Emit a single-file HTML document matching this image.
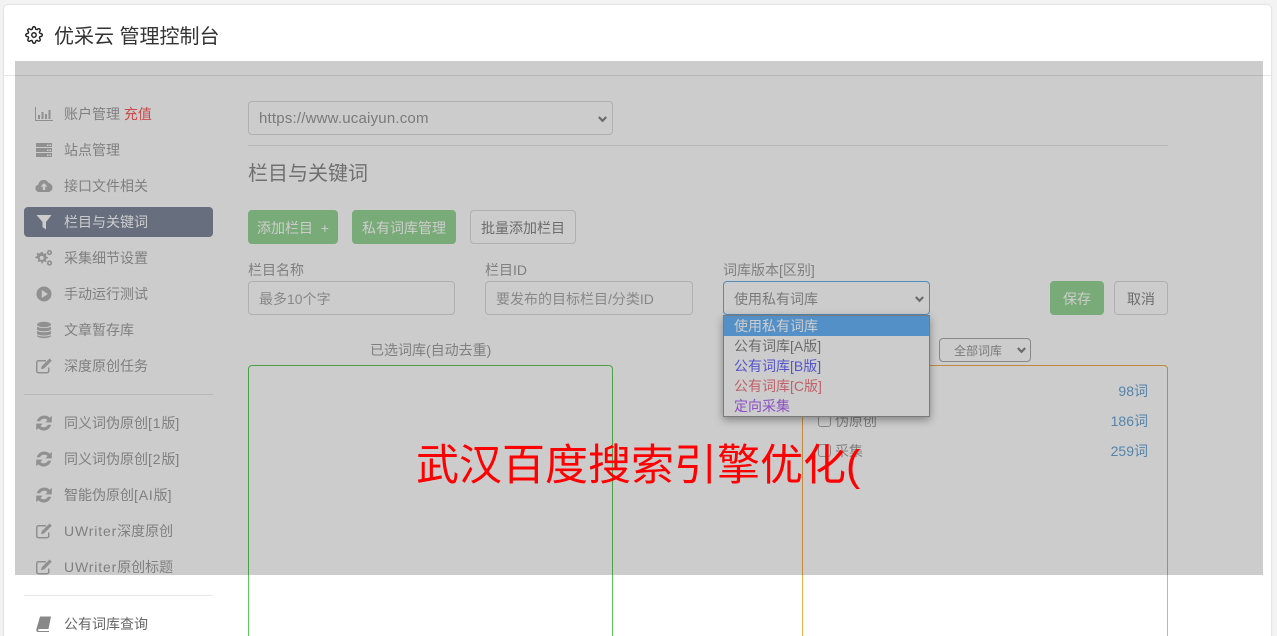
<!DOCTYPE html>
<html lang="zh">
<head>
<meta charset="utf-8">
<title>优采云 管理控制台</title>
<style>
html,body{margin:0;padding:0;width:1277px;height:636px;overflow:hidden;background:#f3f3f3;font-family:"Liberation Sans","Noto Sans CJK SC",sans-serif;font-size:14px;color:#666}
#w{position:relative;width:1277px;height:636px;overflow:hidden}
.a{position:absolute;box-sizing:border-box;white-space:nowrap}
.card{left:4px;top:5px;width:1267px;height:640px;background:#fff;border-radius:4px;box-shadow:0 0 2px rgba(0,0,0,.18)}
.title{left:54px;top:23px;font-size:20px;line-height:28px;color:#333}
.hline{height:1px;background:#e7e7e7}
.nav{left:64px;height:20px;line-height:20px;font-size:14px;color:#a0a0a0}
.nav b{font-weight:normal;letter-spacing:.85px}
.ic{position:absolute;left:35px;width:18px;height:18px;fill:#b4b4b4;stroke:none}
.ctl{border:1px solid #ddd;border-radius:4px;background:#fff;height:34px;line-height:34px;padding-left:10px;color:#999;font-size:14px}
.chev{position:absolute;width:9px;height:7px;fill:none;stroke:#888;stroke-width:2.2}
.btn{height:34px;line-height:34px;text-align:center;border-radius:4px;font-size:14px;border:1px solid #ddd;color:#888;background:#fff}
.g{background:#98d696;border-color:#98d696;color:#fff}
.lab{font-size:14px;line-height:20px;color:#a0a0a0}
.cnt{right:129px;font-size:14px;line-height:20px;color:#6ba6d6}
.chk{width:13px;height:13px;border:1px solid #aaa;border-radius:3px;background:#fff}
.opt{width:205px;height:20px;line-height:20px;padding-left:10px;font-size:14px}
</style>
</head>
<body>
<div id="w">
<div class="a card"></div>
<svg class="a" style="left:25px;top:26px;width:18px;height:18px" viewBox="0 0 24 24" fill="none" stroke="#222" stroke-width="1.900"><circle cx="12" cy="12" r="3"/><path d="M19.400 15a1.650 1.650 0 0 0 .33 1.820l.06.06a2 2 0 0 1 0 2.830 2 2 0 0 1-2.830 0l-.06-.06a1.650 1.650 0 0 0-1.820-.33 1.650 1.650 0 0 0-1 1.510V21a2 2 0 0 1-2 2 2 2 0 0 1-2-2v-.09A1.650 1.650 0 0 0 9 19.400a1.650 1.650 0 0 0-1.820.33l-.06.06a2 2 0 0 1-2.830 0 2 2 0 0 1 0-2.830l.06-.06a1.650 1.650 0 0 0 .33-1.820 1.650 1.650 0 0 0-1.510-1H3a2 2 0 0 1-2-2 2 2 0 0 1 2-2h.09A1.650 1.650 0 0 0 4.600 9a1.650 1.650 0 0 0-.33-1.820l-.06-.06a2 2 0 0 1 0-2.830 2 2 0 0 1 2.830 0l.06.06a1.650 1.650 0 0 0 1.820.33H9a1.650 1.650 0 0 0 1-1.510V3a2 2 0 0 1 2-2 2 2 0 0 1 2 2v.09a1.650 1.650 0 0 0 1 1.510 1.650 1.650 0 0 0 1.820-.33l.06-.06a2 2 0 0 1 2.830 0 2 2 0 0 1 0 2.830l-.06.06a1.650 1.650 0 0 0-.33 1.820V9a1.650 1.650 0 0 0 1.510 1H21a2 2 0 0 1 2 2 2 2 0 0 1-2 2h-.09a1.650 1.650 0 0 0-1.510 1z"/></svg>
<div class="a title">优采云 管理控制台</div>
<div class="a hline" style="left:4px;top:75px;width:1267px"></div>

<svg class="ic" style="top:105px" viewBox="0 0 18 18"><path d="M0 2h1v13h17v1H0z"/><path d="M3 10h2v4H3zM6.500 7h2v7h-2zM10 9h2v5h-2zM13.500 5h2v9h-2z"/></svg>
<div class="a nav" style="top:104px">账户管理 <span style="color:#ff5c5c">充值</span></div>
<svg class="ic" style="top:141px" viewBox="0 0 18 18"><path d="M1 2h16v4H1zM1 7h16v4H1zM1 12h16v4H1z"/><path fill="#fff" d="M12 3.500h1.500V5H12zM14.500 3.500H16V5h-1.500zM12 8.500h1.500V10H12zM14.500 8.500H16V10h-1.500zM12 13.500h1.500V15H12zM14.500 13.500H16V15h-1.500z"/></svg>
<div class="a nav" style="top:140px">站点管理</div>
<svg class="ic" style="top:177px" viewBox="0 0 18 18"><path d="M4 15a3.700 3.700 0 0 1-.8-7.300A5.500 5.500 0 0 1 13.600 6a4.600 4.600 0 0 1 .4 9z"/><path fill="#fff" d="M9 6l3.500 3.600H10.200V13H7.800V9.600H5.500z"/></svg>
<div class="a nav" style="top:176px">接口文件相关</div>
<div class="a" style="left:24px;top:207px;width:189px;height:30px;background:#818a9e;border-radius:4px"></div>
<svg class="ic" style="top:213px;fill:#fff" viewBox="0 0 18 18"><path d="M1.500 2h15L11 9v7.500L7.500 14V9z"/></svg>
<div class="a nav" style="top:212px;color:#fff">栏目与关键词</div>
<svg class="ic" style="top:249px" viewBox="0 0 18 18"><path d="M6.800 3.500h1.400l.4 1.700 1.200.5 1.500-.9 1 1-.9 1.500.5 1.200 1.700.4v1.400l-1.700.4-.5 1.200.9 1.500-1 1-1.500-.9-1.200.5-.4 1.700H6.800l-.4-1.700-1.200-.5-1.500.9-1-1 .9-1.500-.5-1.200L.4 10V8.600l1.700-.4.500-1.200-.9-1.500 1-1 1.500.9 1.200-.5z" transform="translate(0 -.5) scale(.95)"/><circle cx="14.500" cy="3.500" r="2.600"/><circle cx="14.500" cy="14" r="2.600"/><circle cx="6.700" cy="8.900" r="2" fill="#fff"/><circle cx="14.500" cy="3.500" r="1" fill="#fff"/><circle cx="14.500" cy="14" r="1" fill="#fff"/></svg>
<div class="a nav" style="top:248px">采集细节设置</div>
<svg class="ic" style="top:285px" viewBox="0 0 18 18"><circle cx="9" cy="9" r="7.500"/><path fill="#fff" d="M6.800 5l6 4-6 4z"/></svg>
<div class="a nav" style="top:284px">手动运行测试</div>
<svg class="ic" style="top:321px" viewBox="0 0 18 18"><ellipse cx="9" cy="3.500" rx="7" ry="2.700"/><path d="M2 5.500c1 2 13 2 14 0v3c-1 2.300-13 2.300-14 0zM2 9.800c1 2 13 2 14 0v3c-1 2.300-13 2.300-14 0zM2 14c1 2 13 2 14 0v1c-1 2.800-13 2.800-14 0z"/></svg>
<div class="a nav" style="top:320px">文章暂存库</div>
<svg class="ic" style="top:357px" viewBox="0 0 18 18"><path d="M3.500 3H11v1.500H3.500a1 1 0 0 0-1 1V14a1 1 0 0 0 1 1H12a1 1 0 0 0 1-1v-3.500h1.500V14a2.500 2.500 0 0 1-2.500 2.500H3.500A2.500 2.500 0 0 1 1 14V5.500A2.500 2.500 0 0 1 3.500 3z"/><path d="M14.500 1.500l2.300 2.300L9 11.500l-3 .7.700-3z"/></svg>
<div class="a nav" style="top:356px">深度原创任务</div>
<div class="a hline" style="left:24px;top:394px;width:189px"></div>

<svg class="ic" style="top:414px" viewBox="1.500 1.500 15 15"><path d="M3 7.500a6.500 6.500 0 0 1 10.800-2.900L15.500 3v5.500H10l2-2a4 4 0 0 0-6.300 1zM15 10.500A6.500 6.500 0 0 1 4.200 13.400L2.500 15V9.500H8l-2 2a4 4 0 0 0 6.300-1z"/></svg>
<div class="a nav" style="top:413px">同义词伪原创<b>[1</b>版<b>]</b></div>
<svg class="ic" style="top:450px" viewBox="1.500 1.500 15 15"><path d="M3 7.500a6.500 6.500 0 0 1 10.800-2.900L15.500 3v5.500H10l2-2a4 4 0 0 0-6.300 1zM15 10.500A6.500 6.500 0 0 1 4.200 13.400L2.500 15V9.500H8l-2 2a4 4 0 0 0 6.300-1z"/></svg>
<div class="a nav" style="top:449px">同义词伪原创<b>[2</b>版<b>]</b></div>
<svg class="ic" style="top:486px" viewBox="1.500 1.500 15 15"><path d="M3 7.500a6.500 6.500 0 0 1 10.800-2.900L15.500 3v5.500H10l2-2a4 4 0 0 0-6.300 1zM15 10.500A6.500 6.500 0 0 1 4.200 13.400L2.500 15V9.500H8l-2 2a4 4 0 0 0 6.300-1z"/></svg>
<div class="a nav" style="top:485px">智能伪原创<b>[AI</b>版<b>]</b></div>
<svg class="ic" style="top:522px" viewBox="0 0 18 18"><path d="M3.500 3H11v1.500H3.500a1 1 0 0 0-1 1V14a1 1 0 0 0 1 1H12a1 1 0 0 0 1-1v-3.500h1.500V14a2.500 2.500 0 0 1-2.500 2.500H3.500A2.500 2.500 0 0 1 1 14V5.500A2.500 2.500 0 0 1 3.500 3z"/><path d="M14.500 1.500l2.300 2.300L9 11.500l-3 .7.700-3z"/></svg>
<div class="a nav" style="top:521px"><b>UWriter</b>深度原创</div>
<svg class="ic" style="top:558px" viewBox="0 0 18 18"><path d="M3.500 3H11v1.500H3.500a1 1 0 0 0-1 1V14a1 1 0 0 0 1 1H12a1 1 0 0 0 1-1v-3.500h1.500V14a2.500 2.500 0 0 1-2.500 2.500H3.500A2.500 2.500 0 0 1 1 14V5.500A2.500 2.500 0 0 1 3.500 3z"/><path d="M14.500 1.500l2.300 2.300L9 11.500l-3 .7.700-3z"/></svg>
<div class="a nav" style="top:557px"><b>UWriter</b>原创标题</div>
<div class="a hline" style="left:24px;top:595px;width:189px"></div>
<svg class="ic" style="top:615px;fill:#888" viewBox="0 0 18 18"><path d="M5 1.500h11l-2.500 12.500H4.500c-1 0-1.500.5-1.500 1s.5 1 1.500 1H14v1H3.500C2 17 1 16 1.300 14.500z"/></svg>
<div class="a nav" style="top:614px;color:#666">公有词库查询</div>

<div class="a ctl" style="left:248px;top:101px;width:365px;font-size:15px;letter-spacing:.2px;color:#999">https://www.ucaiyun.com<svg class="chev" style="right:5px;top:14px" viewBox="0 0 9 7"><path d="M.8 1l3.700 3.800L8.200 1"/></svg></div>
<div class="a hline" style="left:248px;top:145px;width:920px"></div>
<div class="a" style="left:248px;top:160px;font-size:20px;line-height:28px;color:#8c8c8c">栏目与关键词</div>

<div class="a btn g" style="left:248px;top:210px;width:90px;text-align:left;padding-left:8px">添加栏目&nbsp; +</div>
<div class="a btn g" style="left:352px;top:210px;width:104px">私有词库管理</div>
<div class="a btn" style="left:470px;top:210px;width:106px">批量添加栏目</div>

<div class="a lab" style="left:248px;top:260px">栏目名称</div>
<div class="a lab" style="left:485px;top:260px">栏目ID</div>
<div class="a lab" style="left:723px;top:260px">词库版本[区别]</div>
<div class="a ctl" style="left:248px;top:281px;width:207px;color:#aaa">最多10个字</div>
<div class="a ctl" style="left:485px;top:281px;width:208px;color:#aaa">要发布的目标栏目/分类ID</div>
<div class="a ctl" style="left:723px;top:281px;width:207px;border-color:#66afe9;color:#999">使用私有词库<svg class="chev" style="right:5px;top:14px" viewBox="0 0 9 7"><path d="M.8 1l3.700 3.800L8.200 1"/></svg></div>
<div class="a btn g" style="left:1050px;top:281px;width:54px">保存</div>
<div class="a btn" style="left:1114px;top:281px;width:54px">取消</div>

<div class="a lab" style="left:370px;top:340px">已选词库(自动去重)</div>
<div class="a" style="left:248px;top:365px;width:365px;height:300px;border:1px solid #5cc85c;border-radius:4px"></div>
<div class="a" style="left:802px;top:365px;width:366px;height:300px;border:1px solid #f0ad4e;border-radius:4px"></div>
<div class="a" style="left:939px;top:338px;width:92px;height:24px;border:1px solid #aaa;border-radius:4px;background:#fff;font-size:12px;line-height:24px;padding-left:14px;color:#999">全部词库<svg class="chev" style="right:4px;top:8px" viewBox="0 0 9 7"><path d="M.8 1l3.700 3.800L8.200 1"/></svg></div>

<div class="a chk" style="left:818px;top:414px"></div>
<div class="a lab" style="left:835px;top:411px">伪原创</div>
<div class="a chk" style="left:818px;top:444px"></div>
<div class="a lab" style="left:835px;top:441px">采集</div>
<div class="a cnt" style="top:381px">98词</div>
<div class="a cnt" style="top:411px">186词</div>
<div class="a cnt" style="top:441px">259词</div>

<div class="a" style="left:723px;top:315px;width:207px;height:102px;background:#fff;border:1px solid #999;box-shadow:0 3px 8px rgba(0,0,0,.35)">
  <div class="a opt" style="left:0;top:0;background:#6ab4fb;color:#fff">使用私有词库</div>
  <div class="a opt" style="left:0;top:20px;color:#888">公有词库[A版]</div>
  <div class="a opt" style="left:0;top:40px;color:#6a6aff">公有词库[B版]</div>
  <div class="a opt" style="left:0;top:60px;color:#f07a85">公有词库[C版]</div>
  <div class="a opt" style="left:0;top:80px;color:#b066f5">定向采集</div>
</div>

<div class="a" style="left:15px;top:61px;width:1248px;height:514px;background:rgba(0,0,0,.2)"></div>
<div class="a" style="left:416px;top:436px;font-size:43px;line-height:60px;color:#f00">武汉百度搜索引擎优化(</div>
</div>
</body>
</html>
